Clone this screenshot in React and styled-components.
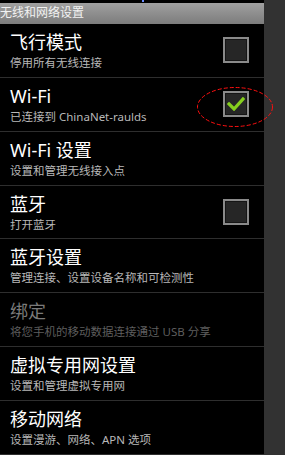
import React from 'react';
import styled, { createGlobalStyle } from 'styled-components';

const GlobalStyle = createGlobalStyle`
  html, body {
    margin: 0;
    padding: 0;
    background: #000;
  }
  body {
    font-family: "Noto Sans", "Noto Sans CJK SC", sans-serif;
  }
`;

const Screen = styled.div`
  display: flex;
  width: 285px;
  height: 455px;
  overflow: hidden;
  background: #000;
`;

const Main = styled.div`
  width: 264px;
  display: flex;
  flex-direction: column;
`;

const SideStrip = styled.div`
  flex: 1;
  background: #323232;
`;

const StatusEdge = styled.div`
  height: 3px;
  background: #000;
  display: flex;
`;

const Dot = styled.span`
  width: 2px;
  height: 2px;
  margin-left: 142px;
  background: #6a8cff;
`;

const TitleBar = styled.div`
  height: 21px;
  display: flex;
  align-items: center;
  background: linear-gradient(#a0a0a0, #7c7c7c);
  color: #f2f2f2;
  font-size: 12px;
  line-height: 1;
`;

const Row = styled.div`
  position: relative;
  height: 53px;
  border-bottom: 1px solid #2e2e2e;
  display: flex;
  align-items: center;
  padding: 0 15px 0 10px;
`;

const Texts = styled.div`
  flex: 1;
  display: flex;
  flex-direction: column;
`;

const Title = styled.div`
  font-size: 18px;
  line-height: 22px;
  color: ${p => (p.$disabled ? '#7a7a7a' : '#fff')};
`;

const Summary = styled.div`
  font-size: 11.5px;
  line-height: 15px;
  margin-top: 2px;
  color: ${p => (p.$disabled ? '#5e5e5e' : '#b8b8b8')};
  white-space: nowrap;
`;

const Box = styled.div`
  position: relative;
  width: 22px;
  height: 22px;
  border: 2px solid #8a8a8a;
  box-shadow: inset 0 0 0 1px #151515;
  background: #262626;
  display: flex;
  align-items: center;
  justify-content: center;
`;

const Ring = styled.svg`
  position: absolute;
  left: -28px;
  top: -6px;
  overflow: visible;
  pointer-events: none;
`;

function CheckBox({ checked, marked }) {
  return (
    <Box>
      {checked && (
        <svg width="18" height="14" viewBox="0 0 18 14">
          <path d="M2 7 L7 12 L16 2" fill="none" stroke="#86cf1e" strokeWidth="3.2" strokeLinecap="square" />
        </svg>
      )}
      {marked && (
        <Ring width="76" height="40" viewBox="0 0 76 40">
          <ellipse cx="38" cy="20" rx="37.5" ry="19.5" fill="none" stroke="#ff1010" strokeWidth="1" strokeDasharray="4 2" />
        </Ring>
      )}
    </Box>
  );
}

const items = [
  { title: '飞行模式', summary: '停用所有无线连接', box: 'off' },
  { title: 'Wi-Fi', summary: '已连接到 ChinaNet-raulds', box: 'on', marked: true },
  { title: 'Wi-Fi 设置', summary: '设置和管理无线接入点' },
  { title: '蓝牙', summary: '打开蓝牙', box: 'off' },
  { title: '蓝牙设置', summary: '管理连接、设置设备名称和可检测性' },
  { title: '绑定', summary: '将您手机的移动数据连接通过 USB 分享', disabled: true },
  { title: '虚拟专用网设置', summary: '设置和管理虚拟专用网' },
  { title: '移动网络', summary: '设置漫游、网络、APN 选项' },
];

export default function App() {
  return (
    <>
      <GlobalStyle />
      <Screen>
        <Main>
          <StatusEdge><Dot /></StatusEdge>
          <TitleBar>无线和网络设置</TitleBar>
          {items.map(it => (
            <Row key={it.title}>
              <Texts>
                <Title $disabled={it.disabled}>{it.title}</Title>
                <Summary $disabled={it.disabled}>{it.summary}</Summary>
              </Texts>
              {it.box && <CheckBox checked={it.box === 'on'} marked={it.marked} />}
            </Row>
          ))}
        </Main>
        <SideStrip />
      </Screen>
    </>
  );
}
